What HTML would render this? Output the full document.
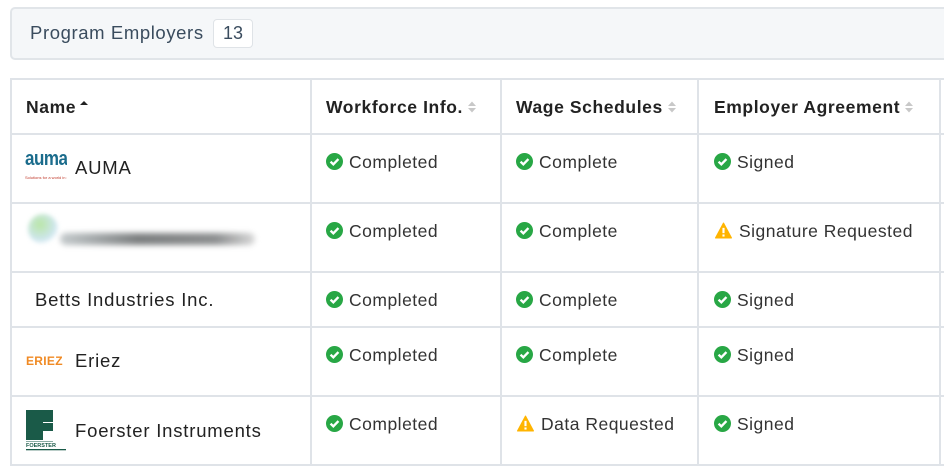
<!DOCTYPE html>
<html><head><meta charset="utf-8"><style>
*{margin:0;padding:0;box-sizing:border-box}
body{width:944px;height:466px;background:#fff;font-family:"Liberation Sans",sans-serif;position:relative;overflow:hidden;color:#2b2b2b}
.bar{position:absolute;left:10px;top:7px;width:950px;height:53px;background:#f5f7f9;border:2px solid #e1e5e9;border-radius:5px}
.title{position:absolute;left:30px;top:22px;font-size:18.5px;color:#3a4c5e;letter-spacing:0.6px}
.badge{position:absolute;left:213px;top:19px;width:40px;height:29px;background:#fff;border:1.5px solid #dfe3e7;border-radius:4px;font-size:18px;color:#3a4c5e;text-align:center;line-height:26px}
.h{position:absolute;background:#dfe3e8;height:2px;left:10px;width:940px}
.v{position:absolute;background:#dfe3e8;width:2px;top:79px;height:387px}
.t{position:absolute;font-size:17.5px;white-space:nowrap;line-height:20px;letter-spacing:0.5px;color:#333}
.n{font-size:18.5px;letter-spacing:0.8px;color:#222}
.b{font-weight:bold;color:#222;letter-spacing:0.6px}
.ic{display:inline-block;width:17px;height:17px;vertical-align:-2px;margin-right:6px}
.sort{display:inline-block;width:10px;height:16px;vertical-align:-2px;margin-left:4px}
</style></head><body>
<div class="bar"></div>
<div class="title">Program Employers</div>
<div class="badge">13</div>

<div class="h" style="top:78px"></div>
<div class="h" style="top:133px"></div>
<div class="h" style="top:202px"></div>
<div class="h" style="top:271px"></div>
<div class="h" style="top:326px"></div>
<div class="h" style="top:395px"></div>
<div class="h" style="top:464px"></div>
<div class="v" style="left:10px"></div>
<div class="v" style="left:310px"></div>
<div class="v" style="left:500px"></div>
<div class="v" style="left:697px"></div>
<div class="v" style="left:939px"></div>

<div class="t b" style="left:26px;top:97px">Name<svg class="sort" viewBox="0 0 10 16" style="margin-left:3px"><path d="M1 6 L5 2 L9 6Z" fill="#222"/></svg></div>
<div class="t b" style="left:326px;top:97px">Workforce Info.<svg class="sort" viewBox="0 0 10 16"><path d="M1 7 L5 2.5 L9 7Z M1 9 L5 13.5 L9 9Z" fill="#c8c8c8"/></svg></div>
<div class="t b" style="left:516px;top:97px">Wage Schedules<svg class="sort" viewBox="0 0 10 16"><path d="M1 7 L5 2.5 L9 7Z M1 9 L5 13.5 L9 9Z" fill="#c8c8c8"/></svg></div>
<div class="t b" style="left:714px;top:97px">Employer Agreement<svg class="sort" viewBox="0 0 10 16"><path d="M1 7 L5 2.5 L9 7Z M1 9 L5 13.5 L9 9Z" fill="#c8c8c8"/></svg></div>

<!-- logos -->
<div style="position:absolute;left:25px;top:147px;width:42px;height:40px;overflow:hidden">
<div style="font:bold 17px 'Liberation Sans Narrow','Liberation Sans',sans-serif;color:#1b6c8c;letter-spacing:-0.5px;line-height:20px;transform:scaleY(1.2);transform-origin:top left">auma</div>
<div style="font-size:4px;color:#c0392b;margin-top:8px;white-space:nowrap">Solutions for a world in motion</div></div>
<div class="t n" style="left:75px;top:158px">AUMA</div>

<div style="position:absolute;left:28px;top:214px;width:30px;height:30px;border-radius:50%;background:radial-gradient(circle at 40% 35%,#b9e6a6,#cfe6f0 60%,rgba(255,255,255,0) 75%);filter:blur(2px)"></div>
<div style="position:absolute;left:60px;top:233px;width:195px;height:12px;border-radius:6px;background:linear-gradient(90deg,#c5cbcd,#7c7f80 40%,#8d8f90 80%,#d9d9d9);filter:blur(3px)"></div>

<div class="t n" style="left:35px;top:290px">Betts Industries Inc.</div>

<div style="position:absolute;left:26px;top:354px;font:bold 12px 'Liberation Sans',sans-serif;color:#f08a24;letter-spacing:0.3px">ERIEZ</div>
<div class="t n" style="left:75px;top:351px">Eriez</div>

<svg style="position:absolute;left:26px;top:410px" width="42" height="42" viewBox="0 0 42 42">
<path d="M0 0 H27 V12 H17 V13 H27 V21 H17 V30 H0Z" fill="#1a5a48"/>
<rect x="0" y="31" width="27" height="0.5" fill="#1a5a48"/>
<text x="0" y="37" font-family="Liberation Sans" font-weight="bold" font-size="5.5" fill="#1a5a48">FOERSTER</text>
<rect x="0" y="39" width="40" height="1.3" fill="#1a5a48"/>
</svg>
<div class="t n" style="left:75px;top:421px">Foerster Instruments</div>

<svg width="0" height="0" style="position:absolute"><defs>
<symbol id="ok" viewBox="0 0 16 16"><circle cx="8" cy="8" r="8" fill="#28a745"/><path d="M4.3 8.2 L6.9 10.7 L11.7 5.7" stroke="#fff" stroke-width="2.2" fill="none"/></symbol>
<symbol id="wn" viewBox="0 0 16 16"><path d="M8 1 L15.5 15 L0.5 15Z" fill="#ffb400" stroke="#ffb400" stroke-linejoin="round" stroke-width="1"/><rect x="7" y="5.5" width="2" height="5" fill="#fff"/><rect x="7" y="11.7" width="2" height="2" fill="#fff"/></symbol>
</defs></svg>

<div class="t" style="left:326px;top:152px"><svg class="ic"><use href="#ok"/></svg>Completed</div>
<div class="t" style="left:516px;top:152px"><svg class="ic"><use href="#ok"/></svg>Complete</div>
<div class="t" style="left:714px;top:152px"><svg class="ic"><use href="#ok"/></svg>Signed</div>

<div class="t" style="left:326px;top:221px"><svg class="ic"><use href="#ok"/></svg>Completed</div>
<div class="t" style="left:516px;top:221px"><svg class="ic"><use href="#ok"/></svg>Complete</div>
<div class="t" style="left:714px;top:221px"><svg class="ic" style="width:19px;margin-right:6px"><use href="#wn"/></svg>Signature Requested</div>

<div class="t" style="left:326px;top:290px"><svg class="ic"><use href="#ok"/></svg>Completed</div>
<div class="t" style="left:516px;top:290px"><svg class="ic"><use href="#ok"/></svg>Complete</div>
<div class="t" style="left:714px;top:290px"><svg class="ic"><use href="#ok"/></svg>Signed</div>

<div class="t" style="left:326px;top:345px"><svg class="ic"><use href="#ok"/></svg>Completed</div>
<div class="t" style="left:516px;top:345px"><svg class="ic"><use href="#ok"/></svg>Complete</div>
<div class="t" style="left:714px;top:345px"><svg class="ic"><use href="#ok"/></svg>Signed</div>

<div class="t" style="left:326px;top:414px"><svg class="ic"><use href="#ok"/></svg>Completed</div>
<div class="t" style="left:516px;top:414px"><svg class="ic" style="width:19px"><use href="#wn"/></svg>Data Requested</div>
<div class="t" style="left:714px;top:414px"><svg class="ic"><use href="#ok"/></svg>Signed</div>
</body></html>
